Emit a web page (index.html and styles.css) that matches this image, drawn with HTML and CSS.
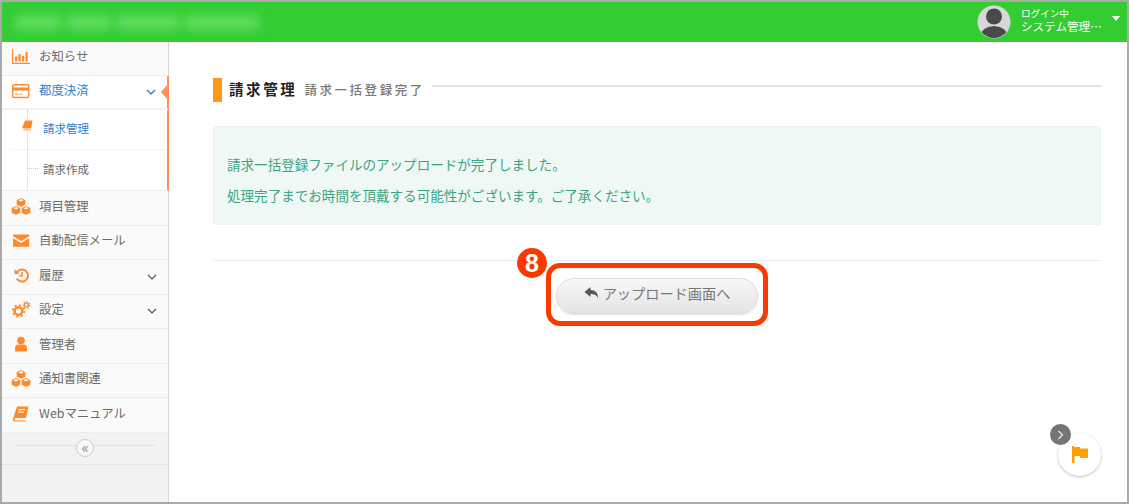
FILE: index.html
```html
<!DOCTYPE html>
<html lang="ja">
<head>
<meta charset="utf-8">
<title>請求管理</title>
<link rel="stylesheet" href="styles.css">
</head>
<body>
<div class="frame">
  <header class="topbar">
    <div class="brand" aria-hidden="true"><span class="b1"></span><span class="b2"></span><span class="b3"></span><span class="b4"></span></div>
    <div class="user">
      <svg class="avatar" width="34" height="34" viewBox="0 0 34 34"><defs><clipPath id="av"><circle cx="17" cy="17" r="16"/></clipPath></defs><circle cx="17" cy="17" r="16.5" fill="#d8d8d8"/><g clip-path="url(#av)" fill="#4a4a4a"><circle cx="17" cy="11.500" r="8"/><ellipse cx="17" cy="30" rx="13" ry="9"/></g></svg>
      <div class="user-text"><div class="u1">ログイン中</div><div class="u2">システム管理…</div></div>
      <span class="caret"></span>
    </div>
  </header>
  <div class="body">
    <aside class="side">
      <div class="item first">
        <svg class="ico" width="20" height="20" viewBox="0 0 20 20" fill="#ff8a2b"><path d="M1 2h1.200v13.800H19V17H1z"/><rect x="4" y="9.500" width="2.200" height="5"/><rect x="7.500" y="7" width="2.200" height="7.500"/><rect x="11" y="9" width="2.200" height="5.500"/><rect x="14.500" y="5" width="2.200" height="9.500"/></svg>
        <span>お知らせ</span>
      </div>
      <div class="item open">
        <svg class="ico" width="20" height="20" viewBox="0 0 20 20"><rect x="1.700" y="3.700" width="16" height="12.800" rx="1.500" fill="#fff" stroke="#ff8a2b" stroke-width="1.400"/><rect x="1.700" y="6.500" width="16" height="3" fill="#ff8a2b"/><rect x="4" y="12.600" width="3.500" height="1" fill="#ff8a2b"/><rect x="8.500" y="12.600" width="2.500" height="1" fill="#ff8a2b"/></svg>
        <span>都度決済</span>
        <svg class="chev" width="10" height="6" viewBox="0 0 10 6" fill="none" stroke="#2a6fb5" stroke-width="1.200"><path d="M1 1l4 4 4-4"/></svg>
      </div>
      <div class="sub">
        <div class="sub-item active">
          <svg class="book-s" width="11" height="11" viewBox="0 0 11 11"><path d="M3 .5h7.500L9 8.500H1.200a1 1 0 0 1-.9-1.200z" fill="#ff8a2b"/><path d="M1 9.200h7.600l-.2 1.200H2z" fill="#ffb37a"/></svg>
          <span>請求管理</span>
        </div>
        <div class="sub-item"><span class="tick"></span><span>請求作成</span></div>
      </div>
      <div class="item">
        <svg class="ico" width="20" height="20" viewBox="0 0 20 20"><use href="#cubes"/></svg>
        <span>項目管理</span>
      </div>
      <div class="item">
        <svg class="ico" width="20" height="20" viewBox="0 0 20 20" fill="#ff8a2b"><path d="M2 3.500h16.200v1.800L10.100 10 2 5.300z"/><path d="M2 7.200l8.100 4.700 8.100-4.700v8.500H2z"/></svg>
        <span>自動配信メール</span>
      </div>
      <div class="item">
        <svg class="ico" width="20" height="20" viewBox="0 0 20 20" fill="none" stroke="#ff8a2b" stroke-width="2"><path d="M6.100 6.100A6 6 0 1 1 5.800 12.500"/><path d="M3.500 3v5h5z" fill="#ff8a2b" stroke="none"/><path d="M11 6v4H8" stroke-width="1.500"/></svg>
        <span>履歴</span>
        <svg class="chev" width="10" height="6" viewBox="0 0 10 6" fill="none" stroke="#555" stroke-width="1.200"><path d="M1 1l4 4 4-4"/></svg>
      </div>
      <div class="item">
        <svg class="ico" width="20" height="20" viewBox="0 0 20 20" fill="none" stroke="#ff8a2b"><circle cx="7.500" cy="11" r="3.800" stroke-width="2.400"/><circle cx="7.500" cy="11" r="5.800" stroke-width="1.800" stroke-dasharray="2 2.550"/><circle cx="15.500" cy="5" r="1.900" stroke-width="1.400"/><circle cx="15.500" cy="5" r="3.300" stroke-width="1.300" stroke-dasharray="1.500 1.500"/></svg>
        <span>設定</span>
        <svg class="chev" width="10" height="6" viewBox="0 0 10 6" fill="none" stroke="#555" stroke-width="1.200"><path d="M1 1l4 4 4-4"/></svg>
      </div>
      <div class="item">
        <svg class="ico" width="20" height="20" viewBox="0 0 20 20" fill="#ff8a2b"><circle cx="10" cy="5.500" r="3.800"/><path d="M4 16.500V13c0-2.500 2-3.500 3.500-3.500h5c1.500 0 3.500 1 3.500 3.500v3.500z"/></svg>
        <span>管理者</span>
      </div>
      <div class="item">
        <svg class="ico" width="20" height="20" viewBox="0 0 20 20"><use href="#cubes"/></svg>
        <span>通知書関連</span>
      </div>
      <div class="item">
        <svg class="ico" width="20" height="20" viewBox="0 0 20 20"><path d="M6 2.500h11.500L15 14H4.500a1.500 1.500 0 0 0-.3 2.500H15l-.2 1H4a2 2 0 0 1-2-2.500z" fill="#ff8a2b"/><rect x="7.500" y="5" width="6.500" height="1.100" fill="#fff"/><rect x="7" y="7.500" width="6" height="1.100" fill="#fff"/></svg>
        <span>Webマニュアル</span>
      </div>
      <div class="collapse"><span class="collapse-btn">«</span></div>
      <div class="side-rest"></div>
    </aside>
    <main class="main">
      <div class="title">
        <span class="title-mark"></span>
        <h1>請求管理</h1>
        <span class="title-sub">請求一括登録完了</span>
        <span class="title-line"></span>
      </div>
      <div class="notice">
        <p>請求一括登録ファイルのアップロードが完了しました。</p>
        <p>処理完了までお時間を頂戴する可能性がございます。ご了承ください。</p>
      </div>
      <div class="actions">
        <button class="back">
          <svg width="16" height="14" viewBox="0 0 16 14" fill="#555"><path d="M6.500 1L.5 6l6 5V8c3.500 0 6 .8 7.500 4 .3-4.500-2.500-8-7.500-8z"/></svg>
          <span>アップロード画面へ</span>
        </button>
        <span class="highlight"></span>
        <span class="badge">8</span>
      </div>
    </main>
  </div>
  <div class="float">
    <svg width="18" height="20" viewBox="0 0 18 20" fill="#ffa000"><path d="M1 1h2v1h6v1.500h8V13H9v-2H3.500v7H1z"/></svg>
    <span class="float-arrow"><svg width="7" height="10" viewBox="0 0 7 10" fill="none" stroke="#eee" stroke-width="1.200"><path d="M1.500 1l4 4-4 4"/></svg></span>
  </div>
</div>
<svg class="defs" width="0" height="0" aria-hidden="true">
  <symbol id="cubes" viewBox="0 0 20 20">
    <g fill="#ff8a2b" stroke="#fff" stroke-width=".8"><path d="M10 .5l4.800 2.400v5L10 10.300 5.200 7.900v-5z"/><path d="M5 8.500l4.800 2.400v5L5 18.300.2 15.900v-5z"/><path d="M15 8.500l4.800 2.400v5L15 18.300l-4.800-2.400v-5z"/></g>
    <g fill="#fff"><path d="M10 2l2.500 1.200L10 4.500 7.500 3.200z"/><path d="M5 10l2.500 1.200L5 12.500l-2.500-1.300z"/><path d="M15 10l2.500 1.200L15 12.500l-2.500-1.300z"/></g>
  </symbol>
</svg>
</body>
</html>
```
FILE: styles.css
```css
* { box-sizing: border-box; }
html, body { margin: 0; padding: 0; }
body {
  width: 1129px;
  height: 504px;
  overflow: hidden;
  background: #fff;
  font-family: "Noto Sans CJK JP", "Noto Sans", sans-serif;
  color: #666;
}
.frame {
  position: relative;
  width: 1129px;
  height: 504px;
  border: 2px solid #a9a9a9;
  display: flex;
  flex-direction: column;
  overflow: hidden;
}
.defs { position: absolute; }

.topbar {
  height: 40px;
  flex: none;
  background: #33cc33;
  display: flex;
  align-items: center;
  justify-content: space-between;
}
.brand {
  display: flex;
  align-items: center;
  gap: 6px;
  margin-left: 13px;
  filter: blur(5px);
}
.brand span { display: block; height: 15px; background: #5fdc5f; }
.b1 { width: 46px; }
.b2 { width: 44px; }
.b3 { width: 62px; }
.b4 { width: 74px; }
.user { display: flex; align-items: center; margin-right: 7px; }
.avatar { margin-top: -1px; }
.user-text { margin: -5px 0 0 10px; color: #fff; width: 91px; }
.u1 { font-size: 9.600px; line-height: 12px; }
.u2 { font-size: 11.600px; line-height: 14px; white-space: nowrap; }
.caret {
  width: 0;
  height: 0;
  margin-top: -7px;
  border-left: 4px solid transparent;
  border-right: 4px solid transparent;
  border-top: 5px solid #fff;
}

.body { flex: 1; display: flex; min-height: 0; }
.side {
  width: 167px;
  flex: none;
  background: #f2f2f2;
  border-right: 1px solid #d9d9d9;
  display: flex;
  flex-direction: column;
}
.item {
  height: 34.500px;
  flex: none;
  display: flex;
  align-items: center;
  padding-left: 9px;
  background: #fafafa;
  border-bottom: 1px solid #ededed;
  font-size: 12.400px;
  color: #6b6b6b;
  white-space: nowrap;
}
.item.first { height: 33.500px; }
.item > span { margin-bottom: 4px; }
.ico { flex: none; margin-right: 8px; margin-bottom: 2px; }
.chev { margin-left: auto; margin-right: 11px; }
.item.open {
  position: relative;
  background: #fff;
  color: #2d7fc9;
  margin-right: -1px;
  border-right: 2px solid #ff8f5e;
  border-bottom: 2px solid #f1f1f1;
}
.item.open::after {
  content: "";
  position: absolute;
  right: 0;
  top: 9px;
  border-top: 7px solid transparent;
  border-bottom: 7px solid transparent;
  border-right: 6px solid #ff8f5e;
}
.sub {
  background: #fff;
  margin-right: -1px;
  border-right: 2px solid #ff8f5e;
  border-bottom: 1px solid #ededed;
  height: 81px;
  flex: none;
}
.sub-item {
  position: relative;
  height: 40px;
  margin-left: 8px;
  padding-left: 33px;
  display: flex;
  align-items: center;
  font-size: 11.500px;
  color: #666;
  border-bottom: 1px solid #f4f4f4;
}
.sub-item > span:last-child { margin-bottom: 3px; }
.sub-item:last-child { border-bottom: 0; }
.sub-item.active { color: #2d7fc9; }
.sub-item.active > span { margin-bottom: 4px; }
.sub-item::before {
  content: "";
  position: absolute;
  left: 17px;
  top: 0;
  bottom: -1px;
  border-left: 1px dotted #bcd4ea;
}
.book-s { position: absolute; left: 12px; top: 10px; z-index: 1; }
.tick {
  position: absolute;
  left: 18px;
  top: 18px;
  width: 10px;
  border-top: 1px dotted #bcd4ea;
}
.collapse {
  position: relative;
  height: 32px;
  flex: none;
  border-bottom: 1px solid #e6e6e6;
  display: flex;
  align-items: center;
  justify-content: center;
}
.collapse::before {
  content: "";
  position: absolute;
  left: 14px;
  right: 13px;
  top: 12px;
  border-top: 1px solid #e2e2e2;
}
.collapse-btn {
  position: relative;
  width: 18px;
  height: 18px;
  border-radius: 50%;
  background: #f8f8f8;
  border: 1px solid #ccc;
  color: #888;
  font-size: 15px;
  line-height: 13px;
  text-align: center;
}
.side-rest { flex: 1; }

.main { flex: 1; padding: 36px 26px 0 44px; min-width: 0; }
.title { display: flex; align-items: center; height: 24px; }
.title-mark { width: 9px; height: 24px; background: #ff9a12; margin-right: 7px; }
.title h1 {
  margin: 0 0 3px;
  font-size: 14.500px;
  font-weight: 700;
  letter-spacing: 2.600px;
  color: #222;
  white-space: nowrap;
}
.title-sub {
  margin: 0 0 2px 7px;
  font-size: 12.500px;
  font-weight: 500;
  letter-spacing: 2.550px;
  color: #777;
  white-space: nowrap;
}
.title-line { flex: 1; margin-left: 7px; margin-top: -8px; border-top: 2px solid #e2e2e2; }
.notice {
  margin-top: 24px;
  height: 99px;
  padding: 22px 13px 0;
  background: #f0f8f6;
  border: 1px solid #e8f3f0;
  border-radius: 3px;
  color: #3aa585;
  font-size: 13.550px;
  line-height: 31px;
}
.notice p { margin: 0; white-space: nowrap; }
.actions {
  position: relative;
  margin-top: 35px;
  border-top: 1px solid #eee;
  padding-top: 17px;
  display: flex;
  justify-content: center;
}
.back {
  display: flex;
  align-items: center;
  justify-content: center;
  gap: 3px;
  width: 202px;
  height: 36px;
  border: 1px solid #dcdcdc;
  border-radius: 18px;
  background: linear-gradient(#f8f8f8, #e4e4e4);
  box-shadow: 0 1px 2px rgba(0,0,0,.12);
  color: #777;
  font-family: inherit;
  font-size: 14.200px;
  padding: 0 0 6px;
}
.highlight {
  position: absolute;
  left: 333px;
  top: 2px;
  width: 222px;
  height: 63px;
  border: 5px solid #f93a00;
  border-radius: 14px;
}
.badge {
  position: absolute;
  left: 304px;
  top: -13px;
  width: 30px;
  height: 30px;
  border-radius: 50%;
  background: #f93a00;
  color: #fff;
  font-family: "Liberation Sans", sans-serif;
  font-weight: 700;
  font-size: 25px;
  line-height: 30px;
  text-align: center;
}
.float {
  position: absolute;
  left: 1056px;
  top: 431px;
  width: 43px;
  height: 43px;
  border-radius: 50%;
  background: #fff;
  box-shadow: 0 1px 3px rgba(0,0,0,.25);
  display: flex;
  align-items: center;
  justify-content: center;
}
.float-arrow {
  position: absolute;
  left: -8px;
  top: -9px;
  width: 21px;
  height: 21px;
  border-radius: 50%;
  background: #757575;
  display: flex;
  align-items: center;
  justify-content: center;
}
```
